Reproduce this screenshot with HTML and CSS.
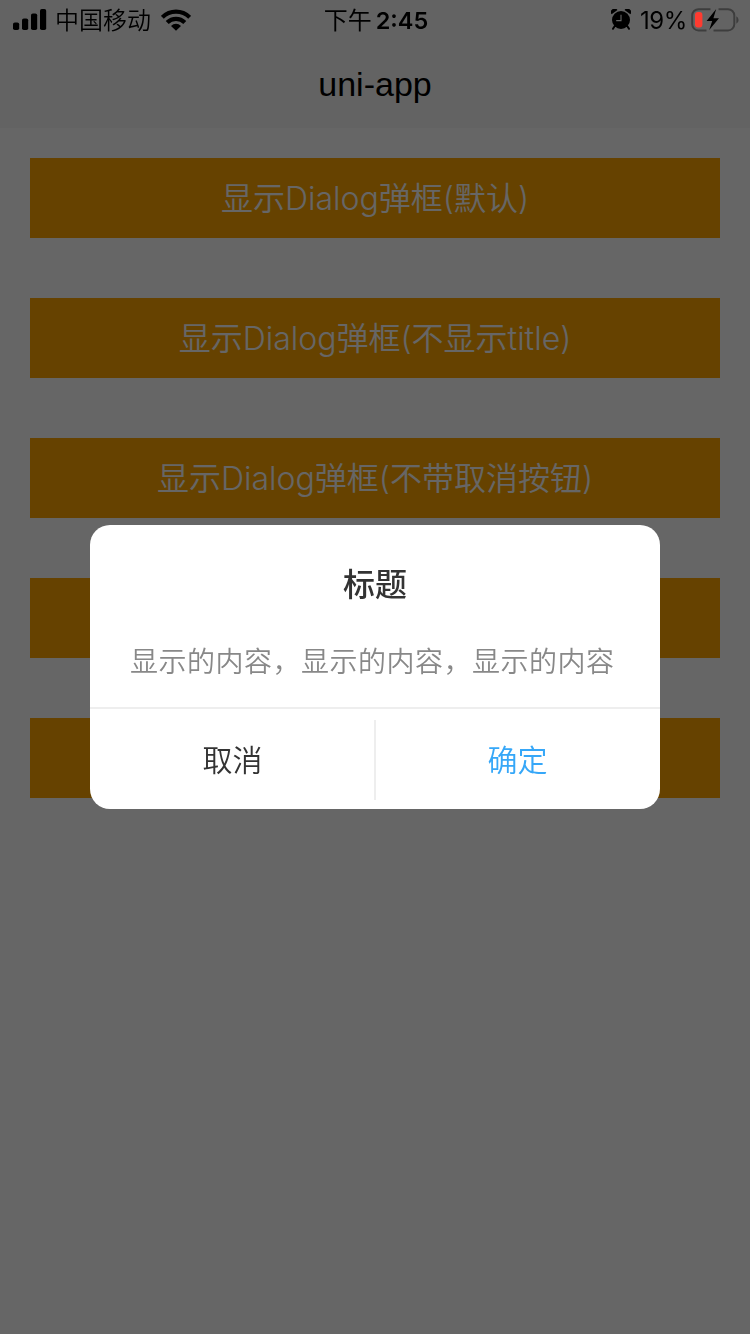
FILE: index.html
```html
<!DOCTYPE html>
<html lang="zh-CN">
<head>
    <meta charset="UTF-8">
    <meta name="viewport" content="width=device-width, initial-scale=1.0">
    <title>uni-app</title>
    <link rel="stylesheet" href="styles.css">
</head>
<body>

<div class="page">
    <header class="nav-bar">
        <h1>uni-app</h1>
    </header>

    <main class="btn-list">
        <button class="btn">显示Dialog弹框(默认)</button>
        <button class="btn">显示Dialog弹框(不显示title)</button>
        <button class="btn">显示Dialog弹框(不带取消按钮)</button>
        <button class="btn"></button>
        <button class="btn"></button>
    </main>
</div>

<!-- Dialog -->
<div class="mask">
    <div class="dialog">
        <h2 class="dialog-title">标题</h2>
        <p class="dialog-content">显示的内容，显示的内容，显示的内容</p>
        <div class="dialog-footer">
            <button class="cancel-btn">取消</button>
            <span class="divider"></span>
            <button class="confirm-btn">确定</button>
        </div>
    </div>
</div>

<!-- System status bar, always on top -->
<div class="status-bar">
    <div class="status-left">
        <svg class="signal" width="34" height="22" viewBox="0 0 34 22">
            <rect x="0" y="13.5" width="6.2" height="7.5" rx="1.8"/>
            <rect x="9" y="9.5" width="6.2" height="11.5" rx="1.8"/>
            <rect x="18" y="4.5" width="6.2" height="16.5" rx="1.8"/>
            <rect x="27" y="0" width="6.2" height="21" rx="1.8"/>
        </svg>
        <span class="carrier">中国移动</span>
        <svg class="wifi" width="30" height="22" viewBox="0 0 30 22">
            <g fill="none" stroke="#000" stroke-width="4.2">
                <path d="M1.3 8.3A19.5 19.5 0 0 1 28.7 8.3"/>
                <path d="M6.2 13.5A12.5 12.5 0 0 1 23.8 13.5"/>
            </g>
            <path d="M15 21.7L10 16.9A7.1 7.1 0 0 1 20 16.9Z"/>
        </svg>
    </div>
    <div class="status-time"><span class="period">下午</span><span class="clock">2:45</span></div>
    <div class="status-right">
        <svg class="alarm" width="20" height="22" viewBox="0 0 20 22">
            <circle cx="10" cy="11" r="9"/>
            <path d="M3.8 17L2 19.8M16.2 17L18 19.8" stroke="#000" stroke-width="2" stroke-linecap="round"/>
            <path d="M0.6 5.2A3.6 3.6 0 0 1 6.5 1Z"/>
            <path d="M19.4 5.2A3.6 3.6 0 0 0 13.5 1Z"/>
            <path d="M10 5.8V11.6H5.2" fill="none" stroke="#666" stroke-width="1.1"/>
        </svg>
        <span class="percent">19%</span>
        <svg class="battery" width="48" height="24" viewBox="0 0 48 24">
            <path d="M19.5 1.2H7.5A6.3 6.3 0 0 0 1.2 7.5V16.2A6.3 6.3 0 0 0 7.5 22.5H15.5M27.5 1.2H37A6.3 6.3 0 0 1 43.3 7.5V16.2A6.3 6.3 0 0 1 37 22.5H22.5" fill="none" stroke="#3d3d3d" stroke-width="2"/>
            <path d="M45.3 8.2Q47.6 9.2 47.6 12T45.3 15.8Z" fill="#3d3d3d"/>
            <rect x="4" y="4" width="7.4" height="15.5" rx="3" fill="#ff3b30"/>
            <path d="M25.2 1L15.6 13H21.2L18.2 22L28 10.2H22.4Z"/>
        </svg>
    </div>
</div>

</body>
</html>
```
FILE: styles.css
```css
body {
    margin: 0;
    background: #fff;
    font-family: Inter, "Noto Sans CJK SC", sans-serif;
}

h1, h2, p {
    margin: 0;
}

button {
    margin: 0;
    padding: 0;
    border: none;
    background: none;
    font-family: inherit;
    cursor: pointer;
}

.page {
    min-height: 1334px;
}

.nav-bar {
    height: 88px;
    padding-top: 40px;
    background: #f8f8f8;
    text-align: center;
}

.nav-bar h1 {
    font-family: "Liberation Sans", Arial, sans-serif;
    font-size: 34px;
    font-weight: 400;
    line-height: 88px;
    color: #000;
}

.btn-list {
    display: flex;
    flex-direction: column;
    gap: 60px;
    padding: 30px;
}

.btn {
    height: 80px;
    padding-top: 2px;
    background: #ffa500;
    color: #fff;
    font-size: 32px;
    font-weight: 350;
    line-height: 78px;
}

/* Dialog */
.mask {
    position: fixed;
    inset: 0;
    display: flex;
    align-items: center;
    justify-content: center;
    background: rgba(0, 0, 0, 0.6);
}

.dialog {
    width: 570px;
    height: 284px;
    border-radius: 20px;
    background: #fff;
    overflow: hidden;
}

.dialog-title {
    padding-top: 36px;
    font-size: 32px;
    font-weight: 500;
    line-height: 48px;
    text-align: center;
    color: #333;
}

.dialog-content {
    height: 66px;
    padding: 32px 40px 0;
    font-size: 28px;
    font-weight: 350;
    line-height: 42px;
    letter-spacing: 0.5px;
    white-space: nowrap;
    color: #888;
}

.dialog-footer {
    display: flex;
    align-items: center;
    height: 100px;
    border-top: 2px solid #eee;
}

.cancel-btn, .confirm-btn {
    flex: 1;
    height: 100px;
    padding-bottom: 3px;
    font-size: 30px;
    font-weight: 350;
    color: #333;
}

.confirm-btn {
    color: #36a7f8;
}

.divider {
    width: 2px;
    height: 80px;
    margin: 2px -1px 0;
    background: #eee;
}

/* Status bar */
.status-bar {
    position: fixed;
    top: 0;
    left: 0;
    right: 0;
    display: grid;
    grid-template-columns: 1fr auto 1fr;
    align-items: center;
    height: 40px;
    padding: 0 11px 0 13px;
    font-size: 24px;
    line-height: 38px;
    color: #000;
}

.status-left, .status-time, .status-right {
    display: flex;
    align-items: center;
}

.status-time, .carrier, .percent {
    padding-top: 2px;
}

.status-right {
    justify-content: flex-end;
}

.carrier {
    margin: 0 10px 0 8px;
    font-weight: 350;
}

.period {
    margin-right: 4px;
}

.clock {
    font-size: 23.5px;
    font-weight: 600;
}

.percent {
    margin: 0 4px 0 9px;
    font-size: 24px;
    letter-spacing: -0.4px;
}
```
